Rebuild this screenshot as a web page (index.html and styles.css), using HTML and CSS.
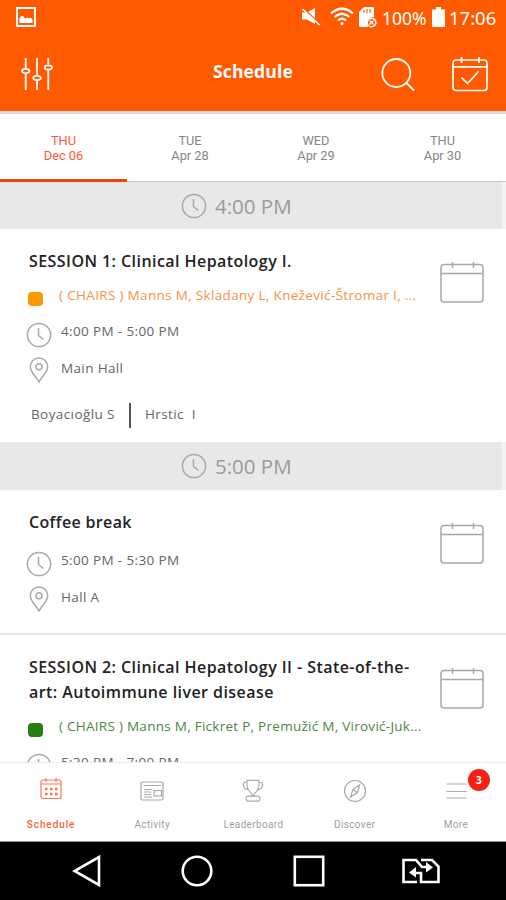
FILE: index.html
```html
<!DOCTYPE html>
<html lang="en">
<head>
<meta charset="utf-8">
<title>Schedule</title>
<link rel="stylesheet" href="styles.css">
</head>
<body>
<svg class="defs" width="0" height="0">
  <symbol id="clock" viewBox="0 0 26 26"><circle cx="13" cy="13" r="11.6"/><path d="M12.5 6v7.500l5 4"/></symbol>
  <symbol id="pin" viewBox="0 0 20 26"><path d="M10 25C8 20.500 1.300 15.500 1.300 9.700a8.700 8.700 0 0 1 17.400 0C18.700 15.500 12 20.500 10 25z"/><circle cx="10" cy="9.700" r="3"/></symbol>
  <symbol id="calendar" viewBox="0 0 44 42"><rect x="1" y="3.500" width="42" height="37.500" rx="3"/><path d="M1 12.500h42M12.500 1v6M33.500 1v6"/></symbol>
</svg>
<div class="phone">
  <header class="top">
    <div class="status">
      <svg class="picture" width="20" height="20" viewBox="0 0 20 20"><rect x="1" y="1" width="18" height="18" fill="none" stroke="#fff" stroke-width="2"/><path d="M3.500 16v-5l2-2 1.500 0 2 2.500 2-1 2 1 1.500-1 2 2v3.500z" fill="#fff"/></svg>
      <svg class="mute" width="20" height="19" viewBox="0 0 20 19"><path d="M1 5.500h5L14 1v16L6 12.500H1z" fill="#fff"/><path d="M1 0l17 17" stroke="#ff5a00" stroke-width="2.200"/><path d="M1.500 2L18.500 18" stroke="#fff" stroke-width="1.600"/></svg>
      <svg class="wifi" width="24" height="19" viewBox="0 0 24 19" fill="none" stroke="#fff" stroke-width="2.200"><path d="M1 6.500Q12-3 23 6.500M4.500 10Q12 3.500 19.500 10M8 13.500q4-3.500 8 0"/><circle cx="12" cy="16.500" r="1.500" fill="#fff" stroke="none"/></svg>
      <svg class="sdcard" width="18" height="21" viewBox="0 0 18 21"><path d="M5 0h9l1 1v9h-3l-4 4 1 6H1L0 19V5z" fill="#fff"/><path d="M5 3v3M8 2v4M11 2v4" stroke="#ff5a00" stroke-width="1.200"/><circle cx="12.500" cy="15.500" r="4.300" fill="#ff5a00" stroke="#fff" stroke-width="1.600"/><path d="M10.500 13.500l4 4m0-4l-4 4" stroke="#fff" stroke-width="1.200"/></svg>
      <span class="percent">100%</span>
      <svg class="battery" width="13" height="20" viewBox="0 0 13 20"><path d="M4 0h5v2.500h4V20H0V2.500h4z" fill="#fff"/></svg>
      <span class="time">17:06</span>
    </div>
    <div class="appbar">
      <svg class="filters" width="33" height="34" viewBox="0 0 33 34" fill="none" stroke="#fff" stroke-width="1.800"><path d="M4.700 1v10M4.700 17v16M16 1v17M16 24v9M27.300 1v6M27.300 13v20"/><ellipse cx="4.700" cy="14" rx="3.700" ry="2.100"/><ellipse cx="16" cy="21" rx="3.700" ry="2.100"/><ellipse cx="27.300" cy="10.500" rx="3.700" ry="2.100"/></svg>
      <h1>Schedule</h1>
      <svg class="search" width="35" height="36" viewBox="0 0 35 36" fill="none" stroke="#fff" stroke-width="1.800"><circle cx="15.300" cy="16" r="14"/><path d="M25 25.500l8 8"/></svg>
      <svg class="agenda" width="36" height="35" viewBox="0 0 36 35" fill="none" stroke="#fff" stroke-width="1.700"><rect x="1" y="3" width="34" height="30.500" rx="3"/><path d="M1 9.800h34M9.500 0v6M27 0v6M9.500 20.500l6 6L26.500 14.500"/></svg>
    </div>
  </header>
  <nav class="days">
    <a class="day active"><span>THU</span><span>Dec 06</span></a>
    <a class="day"><span>TUE</span><span>Apr 28</span></a>
    <a class="day"><span>WED</span><span>Apr 29</span></a>
    <a class="day"><span>THU</span><span>Apr 30</span></a>
  </nav>
  <main class="list">
    <div class="band"><svg class="line"><use href="#clock"/></svg><span>4:00 PM</span></div>
    <article class="card first">
      <div class="info">
        <h2>SESSION 1: Clinical Hepatology I.</h2>
        <div class="row chairs orange"><i class="dot"></i><span>( CHAIRS ) Manns M, Skladany L, Knežević-Štromar I, ...</span></div>
        <div class="row when"><svg class="line"><use href="#clock"/></svg><span>4:00 PM - 5:00 PM</span></div>
        <div class="row where"><svg class="line"><use href="#pin"/></svg><span>Main Hall</span></div>
        <div class="people"><span class="p1">Boyacıoğlu S</span><i class="bar"></i><span class="p2">Hrstic&nbsp; I</span></div>
      </div>
      <svg class="line cal"><use href="#calendar"/></svg>
    </article>
    <div class="band second"><svg class="line"><use href="#clock"/></svg><span>5:00 PM</span></div>
    <article class="card break">
      <div class="info">
        <h2>Coffee break</h2>
        <div class="row when"><svg class="line"><use href="#clock"/></svg><span>5:00 PM - 5:30 PM</span></div>
        <div class="row where"><svg class="line"><use href="#pin"/></svg><span>Hall A</span></div>
      </div>
      <svg class="line cal"><use href="#calendar"/></svg>
    </article>
    <article class="card">
      <div class="info">
        <h2>SESSION 2: Clinical Hepatology II - State-of-the-<br>art: Autoimmune liver disease</h2>
        <div class="row chairs green"><i class="dot"></i><span>( CHAIRS ) Manns M, Fickret P, Premužić M, Virović-Juk...</span></div>
        <div class="row when"><svg class="line"><use href="#clock"/></svg><span>5:30 PM - 7:00 PM</span></div>
      </div>
      <svg class="line cal"><use href="#calendar"/></svg>
    </article>
  </main>
  <nav class="tabs">
    <a class="tab on"><svg width="24" height="24" viewBox="0 0 24 24"><rect x="2" y="3" width="20" height="18.500" rx="2"/><path d="M2 7h20M7 1v4M17 1v4"/><path class="dots" d="M6 12h2.600M11 12h2.600M16 12h2.600M6 17h2.600M11 17h2.600M16 17h2.600"/></svg><span>Schedule</span></a>
    <a class="tab"><svg width="24" height="24" viewBox="0 0 24 24"><rect x="1" y="3" width="22" height="18" rx="1.500"/><path d="M3.500 6.500h17M4 10.500h8M4 13h7M4 15.500h7M4 18h8"/><rect x="14" y="11.500" width="7.500" height="5.500"/></svg><span>Activity</span></a>
    <a class="tab"><svg width="24" height="26" viewBox="0 0 24 26"><path d="M5.500 1.500h13V7c0 4-3 7-5.500 9.500v2h-2v-2C8.500 14 5.500 11 5.500 7zM5.500 3.500h-3L1.500 6c0 4 3 5.500 6 6M18.500 3.500h3l1 2.500c0 4-3 5.500-6 6"/><rect x="4.500" y="18.500" width="15" height="5.500" rx="2"/></svg><span>Leaderboard</span></a>
    <a class="tab"><svg width="24" height="24" viewBox="0 0 24 24"><circle cx="12" cy="12" r="10.500"/><path d="M16.500 6l-2 7.500-7 4.500 2.500-7.500zM10 10.500l4.500 3"/></svg><span>Discover</span></a>
    <a class="tab"><svg width="24" height="24" viewBox="0 0 24 24"><path d="M2.500 5h20M2.500 12.500h20M2.500 19h20"/></svg><span>More</span><b class="badge">3</b></a>
  </nav>
  <div class="sys">
    <svg width="30" height="34" viewBox="0 0 30 34"><path d="M27 3v28L2.500 17z"/></svg>
    <svg width="34" height="34" viewBox="0 0 34 34"><circle cx="17" cy="17" r="14.300"/></svg>
    <svg width="34" height="34" viewBox="0 0 34 34"><rect x="2.800" y="2.800" width="28.400" height="28.400"/></svg>
    <svg width="40" height="28" viewBox="0 0 40 28"><path d="M16 25H2.500V3H15l6 7h7M20 3h11l6.500 6.500V25H20v-9h-8"/><path class="solid" d="M25 5l7 5.500-7 5zM15 10l-7 5.500 7 5z"/></svg>
  </div>
</div>
</body>
</html>
```
FILE: styles.css
```css
* { box-sizing: border-box; }
body { margin: 0; font-family: "Open Sans", "Noto Sans", sans-serif; background: #fff; }
h1, h2 { margin: 0; }
svg { display: block; flex: none; }
span { white-space: nowrap; }
.defs { position: absolute; }
.phone { width: 506px; height: 900px; display: flex; flex-direction: column; overflow: hidden; }
.phone > * { flex: none; }

.top { height: 114px; background: #ff5a00; border-bottom: 3px solid #dedbd9; color: #fff; }
.status { height: 36px; display: flex; align-items: flex-start; padding: 7px 0 0 16px; }
.mute { margin-left: 265px; }
.wifi { margin-left: 9px; }
.sdcard { margin-left: 5px; }
.percent, .time { font-family: "Noto Sans", sans-serif; line-height: 22px; }
.percent { width: 44px; margin-left: 5px; font-size: 17.500px; }
.battery { margin-left: 6px; }
.time { margin-left: 4px; font-size: 18.500px; }
.appbar { display: flex; padding: 21px 18px 0 21px; }
h1 { margin-left: 159px; width: 81px; font: 700 17.500px/28px "Open Sans", sans-serif; letter-spacing: .15px; }
.search { margin-left: 87px; }
.agenda { margin-left: 36px; }

.days { height: 68px; display: grid; grid-template-columns: 127px 126px 126px 127px; border-bottom: 1px solid #ccc; }
.day { display: flex; flex-direction: column; align-items: center; height: 68px; padding-top: 20px; font: 400 12.800px/14.500px Roboto, sans-serif; color: #858585; }
.day.active { color: #ff5637; border-bottom: 3px solid #f4400e; }

.list { height: 580px; overflow: hidden; }
.line { fill: none; stroke: #a8a8a8; stroke-width: 1.500; }
.band { height: 47px; display: flex; align-items: center; padding-left: 181px; background: #e8e8e8; border-right: 4px solid #f3f3f3; font-size: 20.500px; color: #9b9b9b; }
.band.second { height: 48px; }
.band .line { width: 26px; height: 26px; margin-right: 8px; }
.card { display: flex; padding-left: 26px; border-bottom: 2px solid #e5e5e5; }
.card.first { height: 213px; border: 0; }
.card.break { height: 145px; }
.info { width: 413px; padding-top: 20px; }
h2 { padding-left: 3px; font: 600 16px/25px "Open Sans", sans-serif; letter-spacing: .44px; color: #222; white-space: nowrap; }
.break h2 { margin-bottom: 4px; letter-spacing: .35px; }
.cal { width: 44px; height: 42px; margin: 32px 0 0 1px; }
.row { display: flex; align-items: flex-start; font-size: 13.500px; line-height: 20px; letter-spacing: .36px; color: #666; }
.row .line { width: 26px; height: 26px; margin: 1px 9px 0 0; }
.chairs { height: 36px; padding-top: 11px; letter-spacing: .33px; }
.dot { width: 15px; height: 14px; border-radius: 4px; margin: 7px 16px 0 2px; flex: none; }
.orange { color: #f9923f; }
.orange .dot { background: #ff9800; }
.green { color: #4d8544; letter-spacing: .27px; }
.green .dot { background: #2a7d10; }
.when { height: 38px; padding-top: 11px; }
.where { height: 36px; padding-top: 10px; }
.where .line { margin-top: -1px; }
.people { display: flex; align-items: center; height: 28px; margin-top: 16px; padding-left: 5px; font-size: 13.500px; letter-spacing: .4px; color: #666; }
.p1 { width: 84px; }
.bar { width: 2px; height: 25px; margin: 3px 14px 0; background: #555; }

.tabs { height: 80px; display: grid; grid-template-columns: repeat(5, 101.200px); border-top: 1px solid #eee; border-bottom: 1px solid #999; background: #fff; }
.tab { display: flex; flex-direction: column; align-items: center; padding: 16px 0 0 1px; font: 400 10px/12px Roboto, sans-serif; letter-spacing: .35px; color: #a0a0a0; position: relative; }
.tab svg { fill: none; stroke: #aaa; stroke-width: 1.200; height: 24px; }
.tab span { margin-top: 16px; }
.tab.on { color: #ff6038; font-weight: 500; letter-spacing: .9px; }
.tab.on svg { stroke: #ff7450; margin: -2px 0 2px; }
.tab .dots { stroke-width: 2.600; }
.badge { position: absolute; left: 63px; top: 6px; width: 22px; height: 22px; border-radius: 50%; background: #f51f13; color: #fff; font: 700 10px/22px "Open Sans", sans-serif; letter-spacing: 0; text-align: center; }

.sys { height: 58px; background: #000; display: flex; align-items: center; padding-left: 72px; }
.sys svg { fill: none; stroke: #fff; stroke-width: 2.600; }
.sys svg + svg { margin-left: 78px; }
.sys svg:last-child { margin-left: 75px; }
.sys .solid { fill: #fff; stroke: none; }
```
